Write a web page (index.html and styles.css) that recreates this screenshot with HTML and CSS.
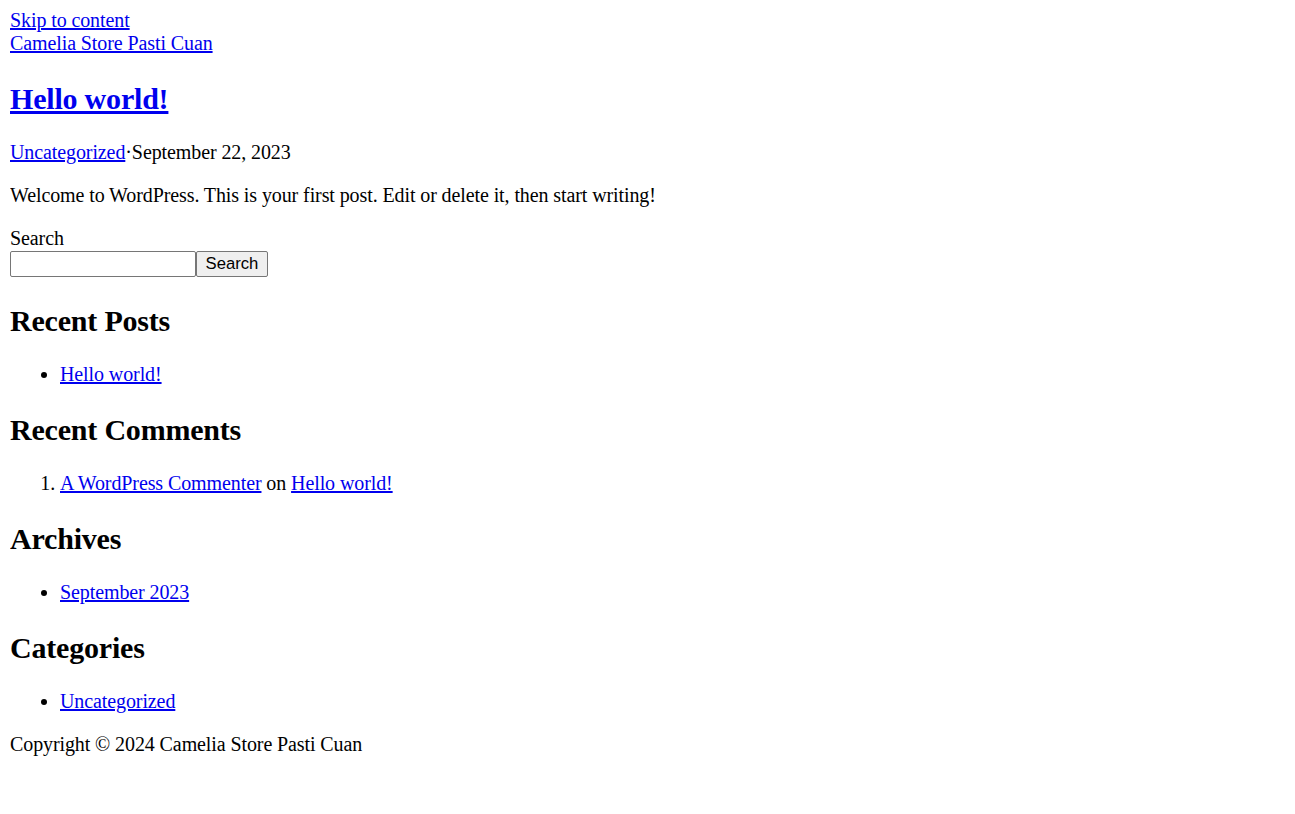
FILE: index.html
```html
<!DOCTYPE html>
<html lang="en">
<head>
<meta charset="utf-8">
<title>Camelia Store Pasti Cuan</title>
<link rel="stylesheet" href="styles.css">
</head>
<body class="page">
<a class="skip-link" href="#content">Skip to content</a>
<header class="site-header">
  <a class="site-title" href="#">Camelia Store Pasti Cuan</a>
</header>
<main id="content" class="site-main">
  <article class="post">
    <h2 class="entry-title"><a href="#">Hello world!</a></h2>
    <p class="entry-meta"><a href="#">Uncategorized</a>·September 22, 2023</p>
    <p class="entry-content">Welcome to WordPress. This is your first post. Edit or delete it, then start writing!</p>
  </article>
</main>
<aside class="sidebar">
  <form class="search-form">
    <label class="search-label" for="s">Search</label>
    <div class="search-row">
      <input id="s" class="search-input" type="search"><button class="search-button" type="button">Search</button>
    </div>
  </form>
  <section class="widget">
    <h2 class="widget-title">Recent Posts</h2>
    <ul class="widget-list">
      <li><a href="#">Hello world!</a></li>
    </ul>
  </section>
  <section class="widget">
    <h2 class="widget-title">Recent Comments</h2>
    <ol class="widget-list">
      <li><a href="#">A WordPress Commenter</a> on <a href="#">Hello world!</a></li>
    </ol>
  </section>
  <section class="widget">
    <h2 class="widget-title">Archives</h2>
    <ul class="widget-list">
      <li><a href="#">September 2023</a></li>
    </ul>
  </section>
  <section class="widget">
    <h2 class="widget-title">Categories</h2>
    <ul class="widget-list">
      <li><a href="#">Uncategorized</a></li>
    </ul>
  </section>
</aside>
<footer class="site-footer">
  <p class="copyright">Copyright © 2024 Camelia Store Pasti Cuan</p>
</footer>
</body>
</html>
```
FILE: styles.css
```css
html {
  background: #fff;
}
.page {
  margin: 9px 10px 10px;
  font-family: "Liberation Serif", "Times New Roman", serif;
  font-size: 20px;
  letter-spacing: -0.1px;
  color: #000;
}
a {
  color: #0000ee;
  text-decoration: underline;
}
.skip-link,
.site-title {
  display: block;
  width: max-content;
}
.entry-title,
.widget-title {
  font-size: 30px;
  font-weight: bold;
  letter-spacing: -0.2px;
  margin: 27px 0 25px;
}
.entry-meta,
.entry-content,
.copyright {
  margin: 20px 0;
}
.search-form {
  margin: 20px 0 0;
}
.search-label {
  display: block;
  margin-bottom: 1px;
}
.search-row {
  display: flex;
  align-items: stretch;
}
.search-input {
  box-sizing: border-box;
  width: 186px;
  height: 26px;
  margin: 0;
  border: 1px solid #767676;
  border-radius: 2px;
  padding: 1px 2px;
  font-family: "Liberation Sans", Arial, sans-serif;
  font-size: 16.67px;
  background: #fff;
}
.search-button {
  box-sizing: border-box;
  width: 72px;
  height: 26px;
  margin: 0;
  padding: 0 6px;
  border: 1px solid #767676;
  border-radius: 2px;
  background: #efefef;
  color: #000;
  font-family: "Liberation Sans", Arial, sans-serif;
  font-size: 16.67px;
  letter-spacing: 0;
}
.widget-list {
  margin: 20px 0;
  padding-left: 50px;
}
```
